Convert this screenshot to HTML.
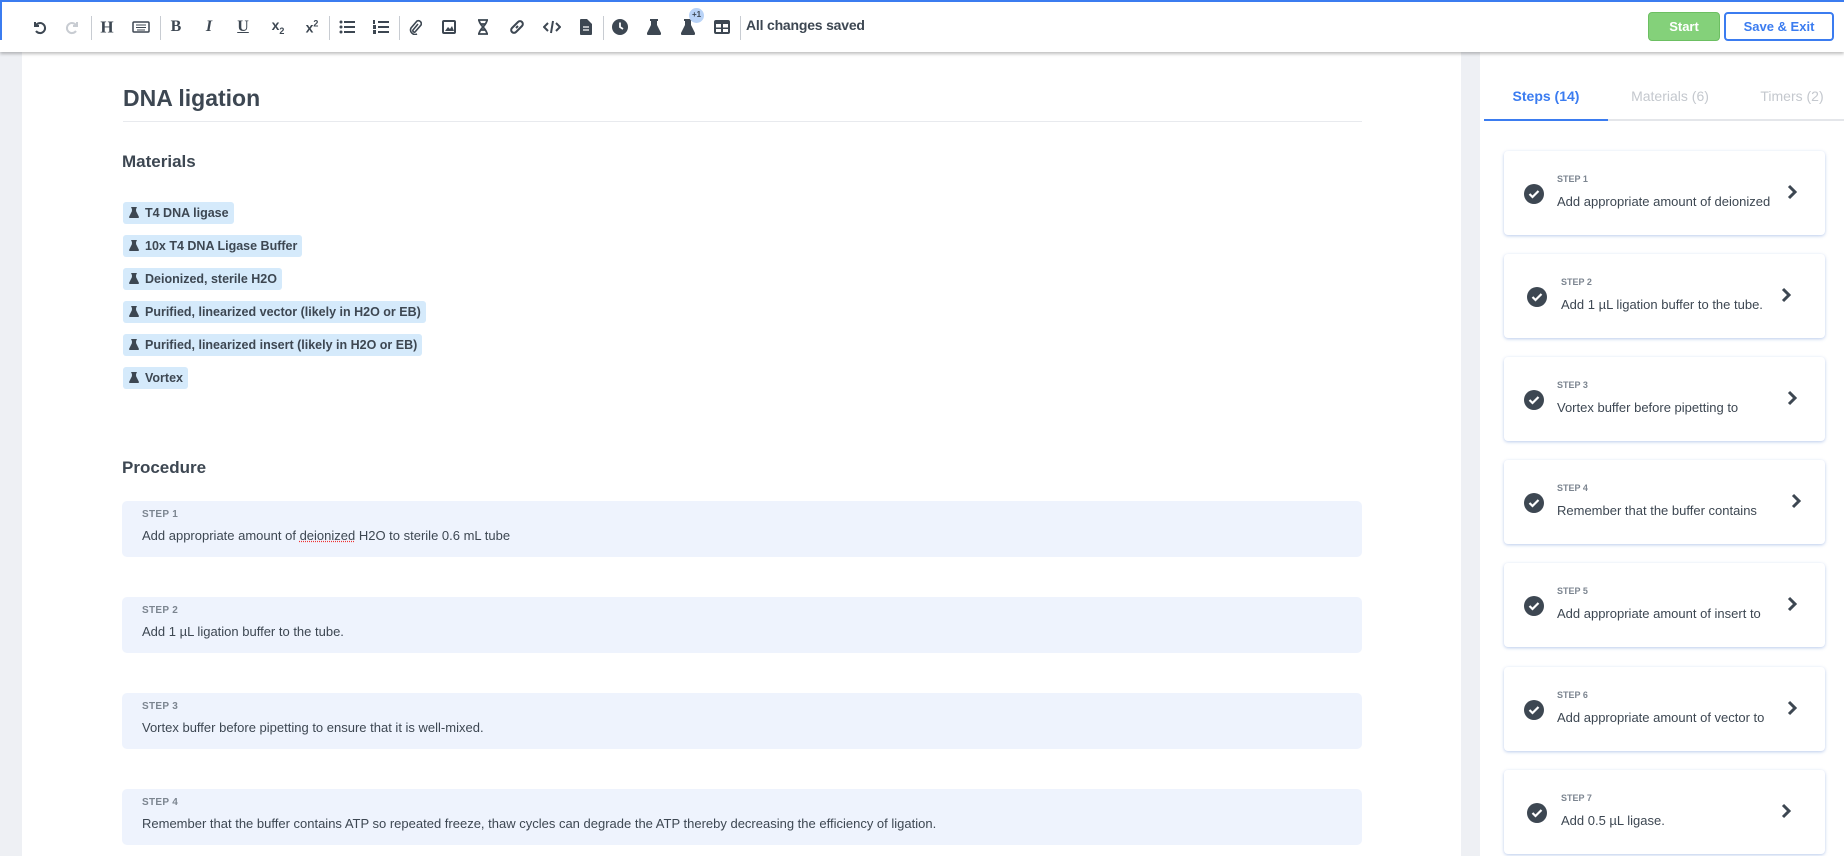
<!DOCTYPE html>
<html><head><meta charset="utf-8"><style>
*{box-sizing:border-box;margin:0;padding:0}
body{width:1844px;height:856px;overflow:hidden;background:#eef0f4;font-family:"Liberation Sans",sans-serif;position:relative;color:#3d4752}
.a{position:absolute}
#tb{left:0;top:0;width:1844px;height:52px;background:#fff;border-top:2px solid #3b7cf0;box-shadow:0 2px 3px rgba(0,0,0,.25);z-index:2}
.ic{position:absolute;top:25px;transform:translate(-50%,-50%);color:#3d4752;font-weight:bold;font-size:16px;line-height:1}
.sep{position:absolute;top:14px;width:1px;height:24px;background:#c8ccd2}
#main{left:22px;top:52px;width:1439px;height:804px;background:#fff}
h1{position:absolute;left:123px;top:85px;font-size:23px;font-weight:bold;color:#3d4752}
.chip{position:absolute;left:123px;height:22px;background:#d5eafb;border-radius:3px;font-size:12.5px;font-weight:bold;line-height:22px;padding:0 5px 0 22px;color:#3d4752}
.chip svg{position:absolute;left:6px;top:5px}
.step{position:absolute;left:122px;width:1240px;height:56px;background:#eef3fd;border-radius:5px}
.step .l{position:absolute;left:20px;top:8px;font-size:10px;font-weight:bold;color:#7c8590;letter-spacing:.3px}
.step .t{position:absolute;left:20px;top:27px;font-size:13px;color:#3d4752}
#rp{left:1480px;top:52px;width:364px;height:804px;background:#fff}
.card{position:absolute;left:1504px;width:321px;height:84px;background:#fff;border-radius:4px;box-shadow:0 1px 3px rgba(60,110,200,.35)}
.card .ck{position:absolute;left:20px;top:33px}
.card .l{position:absolute;left:53px;top:23px;font-size:9px;font-weight:bold;color:#7c8590}
.card .t{position:absolute;left:53px;top:43px;font-size:13px;color:#3d4752}
.card .ch{position:absolute;left:282px;top:33px}
</style></head><body>
<div class="a" style="left:0;top:0;width:2px;height:40px;background:#3b7cf0;z-index:3"></div>
<div id="tb" class="a">
<svg class="ic" style="left:39px" width="16" height="16" viewBox="0 0 16 16"><path d="M4 3v4h4M4.5 7A5 5 0 1 1 5 12" fill="none" stroke="#3d4752" stroke-width="2"/></svg>
<svg class="ic" style="left:73px" width="16" height="16" viewBox="0 0 16 16"><path d="M12 3v4H8M11.5 7A5 5 0 1 0 11 12" fill="none" stroke="#c8ccd2" stroke-width="2"/></svg>
<div class="sep" style="left:91px"></div>
<span class="ic" style="left:107px;font-family:'Liberation Serif',serif;font-size:17px">H</span>
<svg class="ic" style="left:141px" width="18" height="12" viewBox="0 0 18 12"><rect x="1" y="1" width="16" height="10" rx="1" fill="none" stroke="#3d4752" stroke-width="1.5"/><path d="M4 4h10M4 6.5h10M5 9h8" stroke="#3d4752" stroke-width="1"/></svg>
<div class="sep" style="left:160px"></div>
<span class="ic" style="left:176px;font-family:'Liberation Serif',serif">B</span>
<span class="ic" style="left:209px;font-family:'Liberation Serif',serif;font-style:italic">I</span>
<span class="ic" style="left:243px;text-decoration:underline;font-family:'Liberation Serif',serif">U</span>
<span class="ic" style="left:278px;font-size:14px">x<sub style="font-size:9px">2</sub></span>
<span class="ic" style="left:312px;font-size:14px">x<sup style="font-size:9px">2</sup></span>
<div class="sep" style="left:329px"></div>
<svg class="ic" style="left:347px" width="16" height="14" viewBox="0 0 16 14"><g fill="#3d4752"><circle cx="2" cy="2" r="1.5"/><circle cx="2" cy="7" r="1.5"/><circle cx="2" cy="12" r="1.5"/><rect x="5" y="1" width="11" height="2"/><rect x="5" y="6" width="11" height="2"/><rect x="5" y="11" width="11" height="2"/></g></svg>
<svg class="ic" style="left:381px" width="16" height="14" viewBox="0 0 16 14"><g fill="#3d4752"><rect x="0" y="0" width="2" height="4"/><rect x="0" y="5" width="3" height="4"/><rect x="0" y="10" width="3" height="4"/><rect x="5" y="1" width="11" height="2"/><rect x="5" y="6" width="11" height="2"/><rect x="5" y="11" width="11" height="2"/></g></svg>
<div class="sep" style="left:399px"></div>
<svg class="ic" style="left:415px" width="14" height="16" viewBox="0 0 14 16"><path d="M10 5L5 11a1.5 1.5 0 0 0 2 2l6-7a3 3 0 0 0-4-4L3 9a4.5 4.5 0 0 0 6 6" fill="none" stroke="#3d4752" stroke-width="1.6"/></svg>
<svg class="ic" style="left:449px" width="14" height="14" viewBox="0 0 14 14"><rect x="1" y="1" width="12" height="12" rx="1" fill="none" stroke="#3d4752" stroke-width="2"/><path d="M3 11l3-4 2 2 2-3 2 5z" fill="#3d4752"/></svg>
<svg class="ic" style="left:483px" width="12" height="16" viewBox="0 0 12 16"><path d="M1 1h10M1 15h10M2 1c0 5 8 9 8 14M10 1c0 5-8 9-8 14M3 5h6M3 11h6" fill="none" stroke="#3d4752" stroke-width="1.8"/></svg>
<svg class="ic" style="left:517px" width="16" height="16" viewBox="0 0 16 16"><path d="M7 9l2-2M6 6L9 3a2.8 2.8 0 0 1 4 4l-3 3M10 10l-3 3a2.8 2.8 0 0 1-4-4l3-3" fill="none" stroke="#3d4752" stroke-width="2"/></svg>
<svg class="ic" style="left:552px" width="18" height="14" viewBox="0 0 18 14"><path d="M5 3L1 7l4 4M13 3l4 4-4 4M10 1L8 13" fill="none" stroke="#3d4752" stroke-width="2"/></svg>
<svg class="ic" style="left:586px" width="12" height="16" viewBox="0 0 12 16"><path d="M0 1a1 1 0 0 1 1-1h6l5 5v10a1 1 0 0 1-1 1H1a1 1 0 0 1-1-1z" fill="#3d4752"/><path d="M3 8h6M3 11h6" stroke="#fff" stroke-width="1.2"/></svg>
<div class="sep" style="left:603px"></div>
<svg class="ic" style="left:620px" width="16" height="16" viewBox="0 0 16 16"><circle cx="8" cy="8" r="8" fill="#3d4752"/><path d="M8 3.5V8l3 2" fill="none" stroke="#fff" stroke-width="1.8"/></svg>
<svg class="ic" style="left:654px" width="14" height="16" viewBox="0 0 14 16"><path d="M3 0h8v2H10v4l4 8a1.3 1.3 0 0 1-1 2H1a1.3 1.3 0 0 1-1-2l4-8V2H3z" fill="#3d4752"/></svg>
<svg class="ic" style="left:688px" width="14" height="16" viewBox="0 0 14 16"><path d="M3 0h8v2H10v4l4 8a1.3 1.3 0 0 1-1 2H1a1.3 1.3 0 0 1-1-2l4-8V2H3z" fill="#3d4752"/></svg>
<div class="a" style="left:689px;top:6px;width:15px;height:15px;border-radius:50%;background:#b9d3f7;font-size:8px;font-weight:bold;text-align:center;line-height:14px;color:#3d4752">+1</div>
<svg class="ic" style="left:722px" width="16" height="14" viewBox="0 0 16 14"><rect x="0" y="0" width="16" height="14" rx="2" fill="#3d4752"/><rect x="2" y="4" width="5" height="3.5" fill="#fff"/><rect x="9" y="4" width="5" height="3.5" fill="#fff"/><rect x="2" y="9" width="5" height="3" fill="#fff"/><rect x="9" y="9" width="5" height="3" fill="#fff"/></svg>
<div class="sep" style="left:740px"></div>
<span class="a" style="left:746px;top:15px;font-size:14px;font-weight:bold;color:#3d4752;letter-spacing:-.2px">All changes saved</span>
<div class="a" style="left:1648px;top:10px;width:72px;height:29px;background:#84d17a;border:1px solid #6cbf62;border-radius:4px;color:#fff;font-size:13px;font-weight:bold;text-align:center;line-height:27px">Start</div>
<div class="a" style="left:1724px;top:10px;width:110px;height:29px;background:#fff;border:2px solid #3b7cf0;border-radius:4px;color:#3b7cf0;font-size:13px;font-weight:bold;text-align:center;line-height:25px">Save &amp; Exit</div>
</div>

<div id="main" class="a"></div>
<h1>DNA ligation</h1>
<div class="a" style="left:123px;top:121px;width:1239px;height:1px;background:#e8eaee"></div>
<div class="a" style="left:122px;top:152px;font-size:17px;font-weight:bold;color:#3d4752">Materials</div>
<div class="chip" style="top:202px"><svg width="10" height="11" viewBox="0 0 14 16"><path d="M3 0h8v2H10v4l4 8a1.3 1.3 0 0 1-1 2H1a1.3 1.3 0 0 1-1-2l4-8V2H3z" fill="#3d4752"/></svg>T4 DNA ligase</div>
<div class="chip" style="top:235px"><svg width="10" height="11" viewBox="0 0 14 16"><path d="M3 0h8v2H10v4l4 8a1.3 1.3 0 0 1-1 2H1a1.3 1.3 0 0 1-1-2l4-8V2H3z" fill="#3d4752"/></svg>10x T4 DNA Ligase Buffer</div>
<div class="chip" style="top:268px"><svg width="10" height="11" viewBox="0 0 14 16"><path d="M3 0h8v2H10v4l4 8a1.3 1.3 0 0 1-1 2H1a1.3 1.3 0 0 1-1-2l4-8V2H3z" fill="#3d4752"/></svg>Deionized, sterile H2O</div>
<div class="chip" style="top:301px"><svg width="10" height="11" viewBox="0 0 14 16"><path d="M3 0h8v2H10v4l4 8a1.3 1.3 0 0 1-1 2H1a1.3 1.3 0 0 1-1-2l4-8V2H3z" fill="#3d4752"/></svg>Purified, linearized vector (likely in H2O or EB)</div>
<div class="chip" style="top:334px"><svg width="10" height="11" viewBox="0 0 14 16"><path d="M3 0h8v2H10v4l4 8a1.3 1.3 0 0 1-1 2H1a1.3 1.3 0 0 1-1-2l4-8V2H3z" fill="#3d4752"/></svg>Purified, linearized insert (likely in H2O or EB)</div>
<div class="chip" style="top:367px"><svg width="10" height="11" viewBox="0 0 14 16"><path d="M3 0h8v2H10v4l4 8a1.3 1.3 0 0 1-1 2H1a1.3 1.3 0 0 1-1-2l4-8V2H3z" fill="#3d4752"/></svg>Vortex</div>
<div class="a" style="left:122px;top:458px;font-size:17px;font-weight:bold;color:#3d4752">Procedure</div>
<div class="step" style="top:501px"><div class="l">STEP 1</div><div class="t">Add appropriate amount of <span style="text-decoration:underline dotted #e33">deionized</span> H2O to sterile 0.6 mL tube</div></div>
<div class="step" style="top:597px"><div class="l">STEP 2</div><div class="t">Add 1 µL ligation buffer to the tube.</div></div>
<div class="step" style="top:693px"><div class="l">STEP 3</div><div class="t">Vortex buffer before pipetting to ensure that it is well-mixed.</div></div>
<div class="step" style="top:789px"><div class="l">STEP 4</div><div class="t">Remember that the buffer contains ATP so repeated freeze, thaw cycles can degrade the ATP thereby decreasing the efficiency of ligation.</div></div>

<div id="rp" class="a"></div>
<div class="a" style="left:1484px;top:119px;width:360px;height:2px;background:#e4e6ea"></div>
<div class="a" style="left:1484px;top:119px;width:124px;height:2px;background:#3b7cf0"></div>
<div class="a" style="left:1484px;top:88px;width:124px;text-align:center;font-size:14px;font-weight:bold;color:#3b7cf0">Steps (14)</div>
<div class="a" style="left:1610px;top:88px;width:120px;text-align:center;font-size:14px;color:#c4c8ce">Materials (6)</div>
<div class="a" style="left:1740px;top:88px;width:104px;text-align:center;font-size:14px;color:#c4c8ce">Timers (2)</div>

<div class="card" style="top:151px"><svg class="ck" width="20" height="20" viewBox="0 0 20 20"><circle cx="10" cy="10" r="10" fill="#3d4752"/><path d="M5.5 10l3 3 6-6" fill="none" stroke="#fff" stroke-width="2.2"/></svg><div class="l">STEP 1</div><div class="t">Add appropriate amount of deionized</div><svg class="ch" width="12" height="16" viewBox="0 0 12 16"><path d="M3 2l6 6-6 6" fill="none" stroke="#3d4752" stroke-width="3"/></svg></div>
<div class="card" style="top:254px"><svg class="ck" style="left:23px" width="20" height="20" viewBox="0 0 20 20"><circle cx="10" cy="10" r="10" fill="#3d4752"/><path d="M5.5 10l3 3 6-6" fill="none" stroke="#fff" stroke-width="2.2"/></svg><div class="l" style="left:57px">STEP 2</div><div class="t" style="left:57px">Add 1 µL ligation buffer to the tube.</div><svg class="ch" style="left:276px" width="12" height="16" viewBox="0 0 12 16"><path d="M3 2l6 6-6 6" fill="none" stroke="#3d4752" stroke-width="3"/></svg></div>
<div class="card" style="top:357px"><svg class="ck" width="20" height="20" viewBox="0 0 20 20"><circle cx="10" cy="10" r="10" fill="#3d4752"/><path d="M5.5 10l3 3 6-6" fill="none" stroke="#fff" stroke-width="2.2"/></svg><div class="l">STEP 3</div><div class="t">Vortex buffer before pipetting to</div><svg class="ch" width="12" height="16" viewBox="0 0 12 16"><path d="M3 2l6 6-6 6" fill="none" stroke="#3d4752" stroke-width="3"/></svg></div>
<div class="card" style="top:460px"><svg class="ck" width="20" height="20" viewBox="0 0 20 20"><circle cx="10" cy="10" r="10" fill="#3d4752"/><path d="M5.5 10l3 3 6-6" fill="none" stroke="#fff" stroke-width="2.2"/></svg><div class="l">STEP 4</div><div class="t">Remember that the buffer contains</div><svg class="ch" style="left:286px" width="12" height="16" viewBox="0 0 12 16"><path d="M3 2l6 6-6 6" fill="none" stroke="#3d4752" stroke-width="3"/></svg></div>
<div class="card" style="top:563px"><svg class="ck" width="20" height="20" viewBox="0 0 20 20"><circle cx="10" cy="10" r="10" fill="#3d4752"/><path d="M5.5 10l3 3 6-6" fill="none" stroke="#fff" stroke-width="2.2"/></svg><div class="l">STEP 5</div><div class="t">Add appropriate amount of insert to</div><svg class="ch" width="12" height="16" viewBox="0 0 12 16"><path d="M3 2l6 6-6 6" fill="none" stroke="#3d4752" stroke-width="3"/></svg></div>
<div class="card" style="top:667px"><svg class="ck" width="20" height="20" viewBox="0 0 20 20"><circle cx="10" cy="10" r="10" fill="#3d4752"/><path d="M5.5 10l3 3 6-6" fill="none" stroke="#fff" stroke-width="2.2"/></svg><div class="l">STEP 6</div><div class="t">Add appropriate amount of vector to</div><svg class="ch" width="12" height="16" viewBox="0 0 12 16"><path d="M3 2l6 6-6 6" fill="none" stroke="#3d4752" stroke-width="3"/></svg></div>
<div class="card" style="top:770px"><svg class="ck" style="left:23px" width="20" height="20" viewBox="0 0 20 20"><circle cx="10" cy="10" r="10" fill="#3d4752"/><path d="M5.5 10l3 3 6-6" fill="none" stroke="#fff" stroke-width="2.2"/></svg><div class="l" style="left:57px">STEP 7</div><div class="t" style="left:57px">Add 0.5 µL ligase.</div><svg class="ch" style="left:276px" width="12" height="16" viewBox="0 0 12 16"><path d="M3 2l6 6-6 6" fill="none" stroke="#3d4752" stroke-width="3"/></svg></div>
</body></html>
